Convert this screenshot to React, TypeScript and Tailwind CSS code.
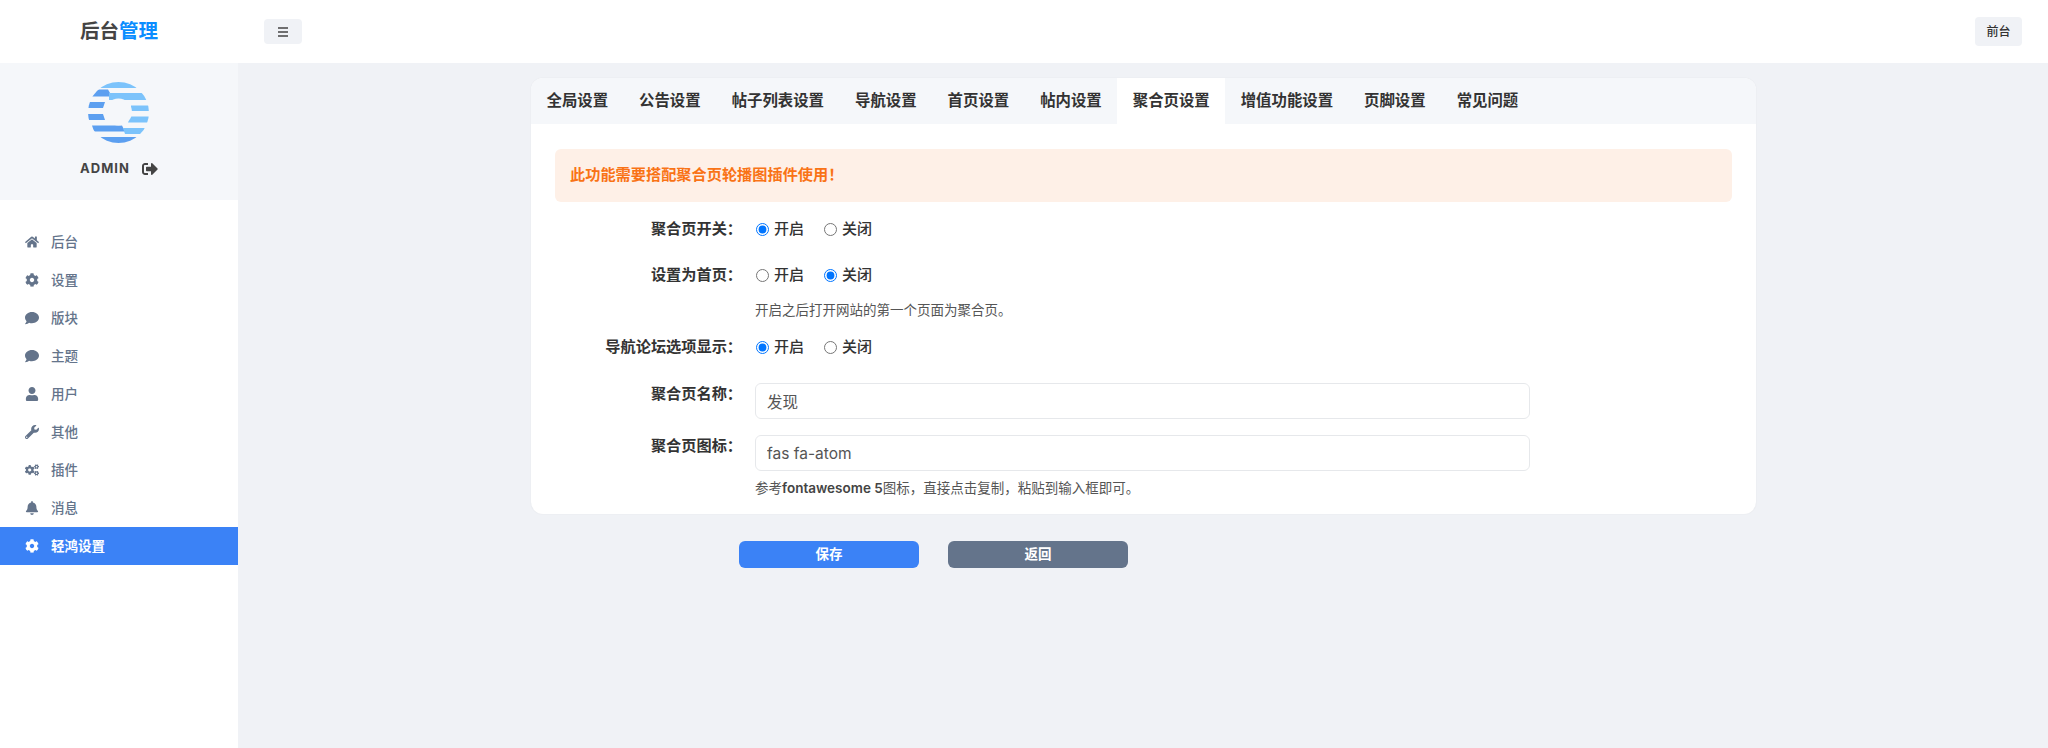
import { FaBell, FaCog, FaCogs, FaComment, FaHome, FaSignOutAlt, FaUser, FaWrench } from "react-icons/fa";

const menu = [
  { label: "后台", icon: FaHome },
  { label: "设置", icon: FaCog },
  { label: "版块", icon: FaComment },
  { label: "主题", icon: FaComment },
  { label: "用户", icon: FaUser },
  { label: "其他", icon: FaWrench },
  { label: "插件", icon: FaCogs },
  { label: "消息", icon: FaBell },
  { label: "轻鸿设置", icon: FaCog, active: true },
];

const tabs = ["全局设置", "公告设置", "帖子列表设置", "导航设置", "首页设置", "帖内设置", "聚合页设置", "增值功能设置", "页脚设置", "常见问题"];

const font = "font-['Inter','Noto_Sans_CJK_SC',sans-serif]";

function Logo() {
  return (
    <svg width="62" height="62" viewBox="0 0 62 62">
      <defs>
        <mask id="ring">
          <rect width="62" height="62" fill="black" />
          <circle cx="30.5" cy="30.5" r="30.5" fill="white" />
          <circle cx="30.5" cy="30" r="13.5" fill="black" />
        </mask>
      </defs>
      <g mask="url(#ring)">
        <rect x="10" y="0" width="44" height="6" fill="#7cc3fb" />
        <path d="M6 7.5h14l4 7H4z" fill="#5c9ff0" />
        <rect x="21" y="11" width="41" height="7" fill="#7cc3fb" />
        <path d="M0 20h17l-2 6H0z" fill="#5c9ff0" />
        <rect x="43" y="23.5" width="19" height="5.5" fill="#7cc3fb" />
        <path d="M0 32h15l2 6H0z" fill="#5c9ff0" />
        <path d="M42 34.5h20v6H40z" fill="#7cc3fb" />
        <path d="M4 43.5h30l3 6H6z" fill="#5c9ff0" />
        <path d="M35 46h27v6H37z" fill="#7cc3fb" />
        <rect x="10" y="55" width="42" height="7" fill="#5c9ff0" />
      </g>
    </svg>
  );
}

function Radio({ checked, label }: { checked?: boolean; label: string }) {
  return (
    <label className="flex w-[68px] items-center">
      <input type="radio" readOnly checked={!!checked} className="m-0 h-[13px] w-[13px] accent-[#0075ff]" />
      <span className="ml-[5px] text-[15px] font-medium text-[#333]">{label}</span>
    </label>
  );
}

function RadioRow({ label, on, className }: { label: string; on: boolean; className: string }) {
  return (
    <div className={`flex items-center ${className}`}>
      <div className="w-[201px] pr-[14px] text-right text-[15.2px] font-bold text-[#333]">{label}</div>
      <Radio checked={on} label="开启" />
      <Radio checked={!on} label="关闭" />
    </div>
  );
}

function InputRow({ label, value, className }: { label: string; value: string; className: string }) {
  return (
    <div className={`flex ${className}`}>
      <div className="w-[200px] pr-[13px] text-right text-[15.2px] font-bold text-[#333]">{label}</div>
      <input
        readOnly
        value={value}
        className="h-[36px] w-[775px] rounded-md border border-[#e6e8eb] bg-white px-[11px] text-[15.5px] text-[#555] outline-none"
      />
    </div>
  );
}

export default function App() {
  return (
    <div className={`flex h-[748px] flex-col overflow-hidden bg-[#f0f2f6] ${font}`}>
      <header className="flex h-[63px] shrink-0 items-center bg-white">
        <div className="w-[238px] pl-[80px] text-[19.5px] font-bold leading-none text-[#444]">
          后台<span className="text-[#0a8dff]">管理</span>
        </div>
        <button className="ml-[26px] flex h-[25px] w-[38px] items-center justify-center rounded bg-[#f0f2f6]">
          <svg width="10" height="10" viewBox="0 0 10 10" stroke="#444" strokeWidth="1.3">
            <path d="M0 1h10M0 5h10M0 9h10" />
          </svg>
        </button>
        <button className="ml-auto mr-[26px] h-[29px] w-[47px] rounded bg-[#f0f2f6] text-[12px] font-medium text-[#333]">前台</button>
      </header>
      <div className="flex flex-1">
        <aside className="w-[238px] shrink-0 bg-white">
          <div className="flex h-[137px] flex-col items-center bg-[#f5f7fa] pt-[19px]">
            <Logo />
            <div className="mt-[15px] flex items-center text-[13px] font-bold tracking-[1px] text-[#444]">
              ADMIN
              <FaSignOutAlt size={16} className="ml-[12px]" />
            </div>
          </div>
          <nav className="pt-[23px]">
            {menu.map((m) => (
              <div
                key={m.label}
                className={`flex h-[38px] items-center pl-[25px] text-[13.5px] ${m.active ? "bg-[#3b82f6] font-bold text-white" : "font-medium text-[#64748b]"}`}
              >
                <span className="flex w-[14px] justify-center">
                  <m.icon size={14} />
                </span>
                <span className="ml-[12px]">{m.label}</span>
              </div>
            ))}
          </nav>
        </aside>
        <main className="flex-1 pt-[15px]">
          <div className="ml-[293px] w-[1225px] overflow-hidden rounded-xl bg-white shadow-[0_0_2px_rgba(0,0,0,0.06)]">
            <div className="flex h-[46px] bg-[#f5f7fa]">
              {tabs.map((t) => (
                <div
                  key={t}
                  className={`flex items-center px-[15.5px] text-[15.4px] font-bold text-[#333] ${t === "聚合页设置" ? "bg-white" : ""}`}
                >
                  {t}
                </div>
              ))}
            </div>
            <div className="px-[24px] pb-[15px] pt-[25px]">
              <div className="flex h-[53px] items-center rounded-md bg-[#fef0e7] px-[15px] text-[15.2px] font-bold text-[#f97316]">
                此功能需要搭配聚合页轮播图插件使用！
              </div>
              <RadioRow label="聚合页开关：" on className="mt-[16px] h-[22px]" />
              <RadioRow label="设置为首页：" on={false} className="mt-[24px] h-[22px]" />
              <div className="ml-[200px] mt-[13px] text-[13.5px] leading-[22px] text-[#555]">开启之后打开网站的第一个页面为聚合页。</div>
              <RadioRow label="导航论坛选项显示：" on className="mt-[15px] h-[22px]" />
              <InputRow label="聚合页名称：" value="发现" className="mt-[25px]" />
              <InputRow label="聚合页图标：" value="fas fa-atom" className="mt-[16px]" />
              <div className="ml-[200px] mt-[6px] text-[13.5px] leading-[22px] text-[#555]">
                参考<span className="font-semibold text-[#444]">fontawesome 5</span>图标，直接点击复制，粘贴到输入框即可。
              </div>
            </div>
          </div>
          <div className="ml-[501px] mt-[27px] flex gap-[29px]">
            <button className="h-[27px] w-[180px] rounded-md bg-[#3b82f6] text-[13.5px] font-bold text-white">保存</button>
            <button className="h-[27px] w-[180px] rounded-md bg-[#64748b] text-[13.5px] font-bold text-white">返回</button>
          </div>
        </main>
      </div>
    </div>
  );
}
